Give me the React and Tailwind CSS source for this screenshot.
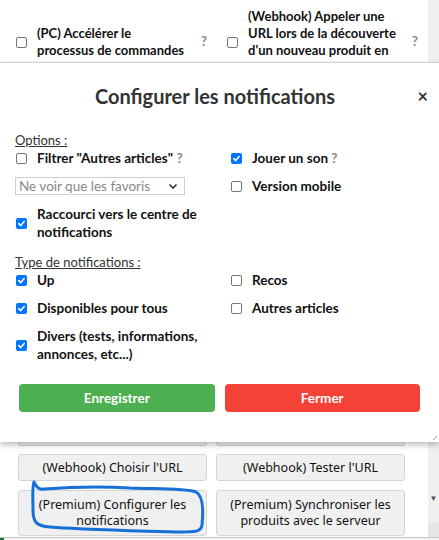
import React from 'react'

const FONT = { fontFamily: 'Lato, "Noto Sans", Arial, sans-serif' }
const BTN_FONT = { fontFamily: '"Noto Sans", Arial, sans-serif' }

function Box({ checked }) {
  if (checked) {
    return (
      <span className="inline-flex h-[11px] w-[11px] shrink-0 items-center justify-center rounded-[2px] bg-[#0075ff]">
        <svg width="9" height="9" viewBox="0 0 10 10" fill="none">
          <path d="M2 5.2 L4.1 7.3 L8 2.8" stroke="white" strokeWidth="1.8" strokeLinecap="round" strokeLinejoin="round" />
        </svg>
      </span>
    )
  }
  return <span className="inline-block h-[11px] w-[11px] shrink-0 rounded-[2px] border border-[#767676] bg-white" />
}

function Opt({ checked, children, q }) {
  return (
    <div className="flex items-center gap-[10px]">
      <Box checked={checked} />
      <span className="text-[13.5px] font-bold leading-[18px] text-[#111]">
        {children}
        {q && <span className="text-[#888]"> ?</span>}
      </span>
    </div>
  )
}

function GrayBtn({ children }) {
  return (
    <div className="flex flex-1 items-center justify-center rounded-[3px] border border-[#d5d5d5] bg-[#f0f0f0] px-2 text-center text-[12.5px] leading-[16px] text-[#111]" style={BTN_FONT}>
      {children}
    </div>
  )
}

export default function App() {
  return (
    <div className="relative h-[540px] w-[439px] overflow-hidden bg-white" style={FONT}>
      {/* fond : liste d'options derrière la fenêtre */}
      <div className="flex h-[62px]">
        <div className="grid flex-1 grid-cols-[211px_1fr] items-start overflow-hidden pl-[16px] pt-[8px]">
          <div className="flex h-[68px] items-center gap-[10px]">
            <Box />
            <span className="w-[154px] text-[13px] font-bold leading-[17px] text-[#111]">(PC) Accélérer le processus de commandes</span>
            <span className="text-[13px] font-bold text-[#888]">?</span>
          </div>
          <div className="flex h-[68px] items-center gap-[10px]">
            <Box />
            <span className="w-[158px] text-[13px] font-bold leading-[17px] text-[#111]">(Webhook) Appeler une URL lors de la découverte d'un nouveau produit en stock</span>
            <span className="-ml-[4px] text-[13px] font-bold text-[#888]">?</span>
          </div>
        </div>
        <div className="w-[11px] bg-[#f0f0f0]" />
      </div>

      {/* fenêtre modale */}
      <div className="relative z-10 h-[380px] border-t border-[#cfcfcf] bg-white px-[15px] shadow-[0_3px_6px_rgba(0,0,0,0.25)]">
        <div className="relative flex h-[66px] items-center justify-center">
          <h2 className="mr-[9px] text-[20px] font-bold text-[#333]">Configurer les notifications</h2>
          <span className="absolute right-[-4px] top-[20px] text-[18px] font-bold text-[#333]">×</span>
        </div>

        <div className="mt-[2px] text-[13px] leading-[18px] text-[#333] underline">Options :</div>
        <div className="grid grid-cols-[215px_1fr] gap-y-[10px] pl-[1px]">
          <Opt q>Filtrer "Autres articles"</Opt>
          <Opt checked q>Jouer un son</Opt>
          <div className="-ml-[1px] flex h-[18px] w-[170px] items-center justify-between border border-[#cfcfcf] bg-white pl-[3px] pr-[6px] text-[13.5px] text-[#888]">
            <span>Ne voir que les favoris</span>
            <svg width="10" height="7" viewBox="0 0 10 7"><path d="M1.5 1.5 L5 5 L8.5 1.5" stroke="#333" strokeWidth="1.6" fill="none" /></svg>
          </div>
          <Opt>Version mobile</Opt>
          <div className="col-span-2 w-[200px]">
            <Opt checked>Raccourci vers le centre de notifications</Opt>
          </div>
        </div>

        <div className="mt-[12px] text-[13px] leading-[18px] text-[#333] underline">Type de notifications :</div>
        <div className="grid grid-cols-[215px_1fr] gap-y-[10px] pl-[1px]">
          <Opt checked>Up</Opt>
          <Opt>Recos</Opt>
          <Opt checked>Disponibles pour tous</Opt>
          <Opt>Autres articles</Opt>
          <div className="w-[200px]">
            <Opt checked>Divers (tests, informations, annonces, etc...)</Opt>
          </div>
        </div>

        <div className="mt-[21px] grid grid-cols-2 gap-[10px] px-[4px]">
          <button className="h-[28px] rounded-[4px] bg-[#4caf50] text-[13.5px] font-bold text-white">Enregistrer</button>
          <button className="h-[28px] rounded-[4px] bg-[#f44336] text-[13.5px] font-bold text-white">Fermer</button>
        </div>
        <svg className="absolute bottom-[1px] right-[1px]" width="6" height="6" viewBox="0 0 6 6">
          <path d="M5 1 L1 5" stroke="#999" strokeWidth="1" />
        </svg>
      </div>

      {/* fond : boutons sous la fenêtre */}
      <div className="flex h-[95px]">
        <div className="flex-1 pl-[18px] pr-[23px]">
          <div className="grid h-[4px] grid-cols-2 gap-[9px]">
            <div className="rounded-b-[3px] border-x border-b border-[#d5d5d5] bg-[#f0f0f0]" />
            <div className="rounded-b-[3px] border-x border-b border-[#d5d5d5] bg-[#f0f0f0]" />
          </div>
          <div className="mt-[8px] grid grid-cols-2 gap-[9px]">
            <div className="flex h-[27px]"><GrayBtn>(Webhook) Choisir l'URL</GrayBtn></div>
            <div className="flex h-[27px]"><GrayBtn>(Webhook) Tester l'URL</GrayBtn></div>
            <div className="flex h-[46px]"><GrayBtn>(Premium) Configurer les notifications</GrayBtn></div>
            <div className="flex h-[46px]"><GrayBtn>(Premium) Synchroniser les produits avec le serveur</GrayBtn></div>
          </div>
        </div>
        <div className="flex w-[11px] flex-col items-center bg-[#f0f0f0]">
          <div className="flex-1" />
          <span className="mb-[20px] text-[8px] leading-[8px] text-[#555]">▼</span>
          <div className="h-[15px] w-full bg-[#e6e6e6]" />
        </div>
      </div>

      {/* barre du bas */}
      <div className="flex h-[3px] border-t border-[#c8c8c8] bg-[#f3f3f3]">
        <div className="w-[4px] bg-[#1d6f42]" />
      </div>

      {/* annotation à main levée */}
      <svg className="pointer-events-none absolute left-0 top-0" width="439" height="540" viewBox="0 0 439 540">
        <path
          d="M34 482 C36 486 38 490 44 489 C70 487 100 486 130 488 C160 489 185 488 196 492 C204 496 203 515 202 525 C201 532 195 532 180 532 C140 531 90 530 50 527 C36 526 33 522 33 510 C33 498 32 488 34 482"
          stroke="#1670d8" strokeWidth="3" fill="none" strokeLinecap="round" strokeLinejoin="round"
        />
      </svg>
    </div>
  )
}
